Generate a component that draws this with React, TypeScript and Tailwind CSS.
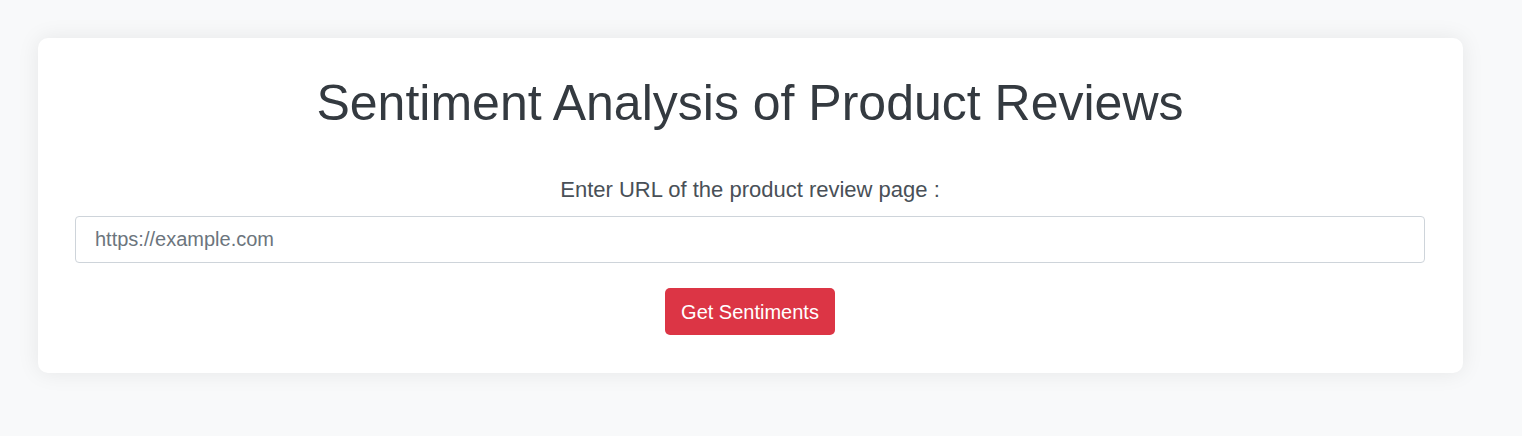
export default function App() {
  return (
    <div
      className="min-h-[436px] w-full bg-[#f8f9fa] pt-[38px] pl-[38px]"
      style={{ fontFamily: '"Liberation Sans", Arial, sans-serif' }}
    >
      <div className="w-[1425px] rounded-[10px] bg-white pt-[35px] pb-[38px] pl-[37px] pr-[38px] shadow-[0_0_22px_rgba(0,0,0,0.08)]">
        {/* Heading */}
        <h1 className="text-center text-[50px] leading-[60px] text-[#343a40]">
          Sentiment Analysis of Product Reviews
        </h1>

        {/* Form */}
        <form className="mt-[41px] flex flex-col items-center">
          <label
            htmlFor="url"
            className="text-[22px] leading-[32px] text-[#495057]"
          >
            Enter URL of the product review page :
          </label>
          <input
            id="url"
            type="text"
            placeholder="https://example.com"
            className="mt-[10px] h-[47px] w-full rounded-[4px] border border-[#ced4da] px-[19px] text-[20px] text-[#495057] placeholder:text-[#6c757d] outline-none"
          />
          <button
            type="button"
            className="mt-[25px] h-[47px] rounded-[5px] bg-[#dc3545] px-[16px] text-[20px] text-white"
          >
            Get Sentiments
          </button>
        </form>
      </div>
    </div>
  );
}
